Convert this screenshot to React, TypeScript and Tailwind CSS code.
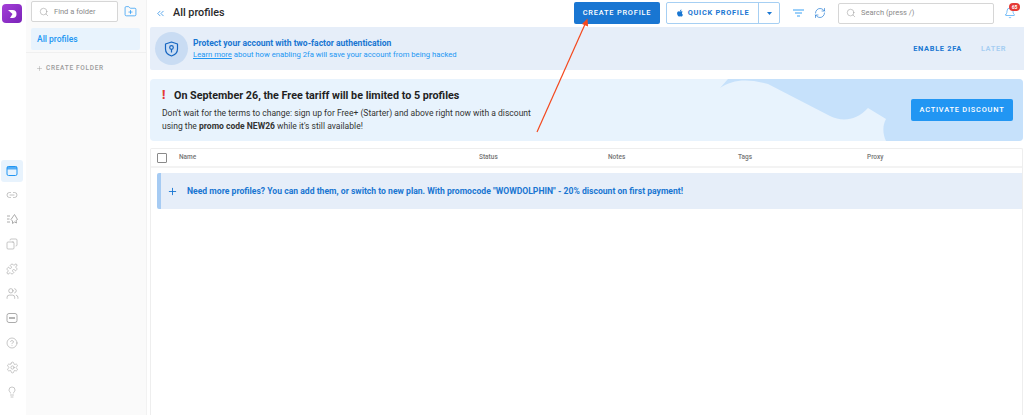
import React from "react";
import { ChevronsLeft, Search, FolderPlus, Plus, Bell, RefreshCw, Link2, Copy, Puzzle, Users, CircleHelp, Settings, Lightbulb } from "lucide-react";
import { FaApple } from "react-icons/fa";

const GRAY = "#a3a3a3";

function Slot({ children }: { children: React.ReactNode }) {
  return <div className="h-[24.6px] flex items-center justify-center">{children}</div>;
}

export default function App() {
  return (
    <div className="relative w-[1024px] h-[415px] overflow-hidden flex bg-white font-['Roboto','Liberation_Sans',sans-serif]">
      <div className="w-[26px] flex flex-col justify-between shrink-0 pt-[4px] pb-[11px]">
        <div className="ml-[2px] w-[20px] h-[19px] rounded-[4px] bg-gradient-to-br from-[#a53fd8] to-[#7a22b8] flex items-center justify-center">
          <svg width="11" height="10" viewBox="0 0 11 10"><path d="M1 1h4.500a4 4 0 0 1 0 8H3L5.500 5 1 1z" fill="#fff" /></svg>
        </div>
        <div className="flex flex-col items-center w-[24px]">
          <div className="h-[22px] w-[22px] mb-[1px] rounded-[3px] bg-[#e8f3fd] flex items-center justify-center">
            <svg width="12" height="12" viewBox="0 0 12 12" fill="none">
              <rect x="1" y="1.5" width="10" height="9" rx="1.5" stroke="#2196f3" strokeWidth="1" />
              <rect x="1" y="1.5" width="10" height="3" fill="#2196f3" opacity="0.75" />
            </svg>
          </div>
          <Slot><Link2 size={12} color={GRAY} strokeWidth={1.3} /></Slot>
          <Slot>
            <svg width="13" height="13" viewBox="0 0 13 13" fill="none" stroke={GRAY} strokeWidth="0.9">
              <path d="M1 3h3M1 6h2.500M1 9h3" />
              <path d="M8.500 1.500L11.500 6.500 10 7.500 10.500 10 8.500 9 6.500 10.500 6.500 8 5 6.500z" strokeLinejoin="round" />
            </svg>
          </Slot>
          <Slot><Copy size={12} color={GRAY} strokeWidth={1.2} className="-scale-x-100" /></Slot>
          <Slot><Puzzle size={12} color={GRAY} strokeWidth={1.2} /></Slot>
          <Slot><Users size={13} color={GRAY} strokeWidth={1.2} /></Slot>
          <Slot>
            <svg width="12" height="12" viewBox="0 0 12 12" fill="none">
              <rect x="1" y="1.500" width="10" height="9" rx="2" stroke={GRAY} strokeWidth="0.9" />
              <rect x="3" y="5" width="6" height="2" fill={GRAY} opacity="0.8" />
            </svg>
          </Slot>
          <Slot><CircleHelp size={12} color={GRAY} strokeWidth={1.2} /></Slot>
          <Slot><Settings size={13} color={GRAY} strokeWidth={1.1} /></Slot>
          <Slot><Lightbulb size={12} color={GRAY} strokeWidth={1.2} /></Slot>
        </div>
      </div>

      <div className="w-[120px] shrink-0 bg-[#fafafa] flex flex-col pl-[5px] pt-[1px]">
        <div className="flex items-center">
          <div className="w-[87px] h-[21px] border border-[#d6d6d6] rounded-[2px] bg-white flex items-center pl-[7px] gap-[5px]">
            <Search size={10} className="text-[#8a8a8a]" strokeWidth={1.1} />
            <span className="text-[7.5px] text-[#8a8a8a] whitespace-nowrap">Find a folder</span>
          </div>
          <FolderPlus size={13} className="ml-[6px] text-[#2196f3]" strokeWidth={1.3} />
        </div>
        <div className="mt-[6px] w-[109px] h-[22px] bg-[#e8f3fd] rounded-[2px] flex items-center pl-[6px] text-[8.5px] text-[#2196f3] font-medium">All profiles</div>
        <div className="mt-[2px] -ml-[5px] h-px bg-[#f0f0f0]" />
        <div className="mt-[11px] ml-[5px] flex items-center gap-[3px] text-[6.5px] tracking-[0.7px] text-[#9a9a9a] font-medium whitespace-nowrap">
          <Plus size={7} strokeWidth={1.5} />CREATE FOLDER
        </div>
      </div>

      <div className="flex-1 flex flex-col min-w-0 border-l border-[#f2f2f2]">
        <div className="h-[24px] mt-[1px] flex items-center pl-[8px] pr-[8px] shrink-0">
          <ChevronsLeft size={11} className="text-[#1e88e5]" strokeWidth={1.6} />
          <span className="ml-[7px] text-[10.8px] font-medium text-[#2a2a2a] whitespace-nowrap">All profiles</span>
          <div className="ml-auto flex items-center">
            <button className="w-[86px] h-[22px] rounded-[2px] bg-[#1976d2] text-white text-[7.4px] tracking-[0.8px] font-medium whitespace-nowrap">CREATE PROFILE</button>
            <div className="ml-[6px] w-[114px] h-[22px] border border-[#a6cff3] rounded-[2px] flex items-center">
              <div className="w-[91px] flex items-center justify-center gap-[4px] text-[7.4px] tracking-[0.7px] font-bold text-[#1976d2] whitespace-nowrap">
                <FaApple size={8} color="#1976d2" />QUICK PROFILE
              </div>
              <div className="flex-1 h-full border-l border-[#a6cff3] flex items-center justify-center">
                <svg width="5" height="3" viewBox="0 0 5 3"><path d="M0 0h5L2.500 3z" fill="#1976d2" /></svg>
              </div>
            </div>
            <svg className="ml-[13px]" width="11" height="8" viewBox="0 0 11 8" fill="none" stroke="#2196f3" strokeWidth="0.9">
              <path d="M0 1h11M2 4h7M4 7h3" />
            </svg>
            <RefreshCw size={12} className="ml-[10px] text-[#1976d2]" strokeWidth={1.3} />
            <div className="ml-[12px] w-[156px] h-[21px] border border-[#d6d6d6] rounded-[2px] flex items-center pl-[7px] gap-[5px]">
              <Search size={10} className="text-[#8a8a8a]" strokeWidth={1.1} />
              <span className="text-[7.5px] text-[#8a8a8a] whitespace-nowrap">Search (press /)</span>
            </div>
            <div className="relative ml-[10px]">
              <Bell size={12} className="text-[#2196f3]" strokeWidth={1.2} />
              <span className="absolute -top-[4px] left-[5px] w-[11px] h-[8px] rounded-full bg-[#e53935] text-white text-[5px] leading-[8px] text-center font-bold">65</span>
            </div>
          </div>
        </div>

        <div className="ml-[3px] mt-[2px] h-[43px] shrink-0 bg-[#e6eef9] rounded-l-[2px] flex items-center pl-[5px]">
          <div className="w-[33px] h-[33px] rounded-full bg-[#c9dcf3] flex items-center justify-center">
            <svg width="15" height="16" viewBox="0 0 15 16" fill="none" stroke="#1565c0" strokeWidth="1.2">
              <path d="M7.500 1L13.500 3V8C13.500 11.500 10.500 14 7.500 15C4.500 14 1.500 11.500 1.500 8V3z" strokeLinejoin="round" />
              <circle cx="7.500" cy="6.500" r="1.800" />
              <path d="M7.500 8.300V11.500" />
            </svg>
          </div>
          <div className="ml-[5px] flex flex-col">
            <span className="text-[8.55px] leading-[12px] font-bold text-[#1976d2] whitespace-nowrap">Protect your account with two-factor authentication</span>
            <span className="text-[7.7px] leading-[11px] text-[#2196f3] whitespace-nowrap"><span className="underline">Learn more</span> about how enabling 2fa will save your account from being hacked</span>
          </div>
          <span className="ml-auto text-[7.4px] tracking-[0.7px] font-bold text-[#1976d2] whitespace-nowrap">ENABLE 2FA</span>
          <span className="ml-[19px] mr-[18px] text-[7.4px] tracking-[0.6px] font-bold text-[#a6cff3]">LATER</span>
        </div>

        <div className="relative ml-[3px] mr-[1px] mt-[9px] h-[62px] shrink-0 bg-[#e8f3fd] rounded-[4px] overflow-hidden flex items-center">
          <svg className="absolute right-0 top-0" width="303" height="62" viewBox="0 0 303 62">
            <path d="M0 9C12 1 26 -1 48 5L110 37C122 43 136 42 148 29L166 40C162 47 163 56 166 62H303V0H8z" fill="#c6e1fb" />
          </svg>
          <div className="relative pl-[12px]">
            <div className="text-[10.75px] leading-[15px] font-bold text-[#1f1f1f] whitespace-nowrap flex items-center">
              <span className="text-[#e53935] text-[12px] font-black w-[12px]">!</span>On September 26, the Free tariff will be limited to 5 profiles
            </div>
            <div className="mt-[4px] text-[8.55px] leading-[13px] text-[#333] whitespace-nowrap">Don't wait for the terms to change: sign up for Free+ (Starter) and above right now with a discount<br />using the <b>promo code NEW26</b> while it's still available!</div>
          </div>
          <button className="relative ml-auto mr-[10px] w-[102px] h-[22px] rounded-[2px] bg-[#2196f3] text-white text-[7.4px] tracking-[0.8px] font-medium whitespace-nowrap">ACTIVATE DISCOUNT</button>
        </div>

        <div className="ml-[3px] mr-[1px] mt-[7px] flex-1 border border-[#eeeeee] border-b-0 rounded-t-[2px]">
          <div className="h-[19px] border-b-2 border-[#f3f3f3] flex items-center text-[6.5px] font-medium text-[#757575]">
            <div className="ml-[6px] w-[10px] h-[10px] border border-[#8a8a8a] rounded-[1px]" />
            <span className="ml-[12px] w-[300px]">Name</span>
            <span className="w-[129px]">Status</span>
            <span className="w-[130px]">Notes</span>
            <span className="w-[129px]">Tags</span>
            <span>Proxy</span>
          </div>
          <div className="ml-[6px] mt-[5px] h-[36px] bg-[#e6eef9] border-l-[4px] border-[#a6cbf3] flex items-center pl-[6px] rounded-l-[2px]">
            <Plus size={11} className="text-[#1976d2]" strokeWidth={2} />
            <span className="ml-[9px] text-[8.62px] font-bold text-[#1976d2] whitespace-nowrap">Need more profiles? You can add them, or switch to new plan. With promocode "WOWDOLPHIN" - 20% discount on first payment!</span>
          </div>
        </div>
      </div>

      <svg className="absolute left-0 top-0 pointer-events-none" width="1024" height="415">
        <path d="M537 132L586 22" stroke="#f4481e" strokeWidth="1.2" />
        <path d="M587.500 18.500L582 24L588 26.500z" fill="#f4481e" />
      </svg>
    </div>
  );
}
